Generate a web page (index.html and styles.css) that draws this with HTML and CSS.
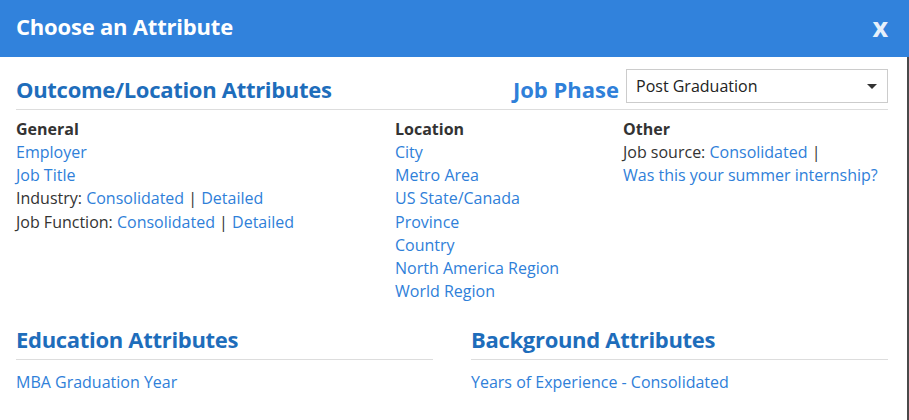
FILE: index.html
```html
<!DOCTYPE html>
<html>
<head>
<meta charset="utf-8">
<link rel="stylesheet" href="styles.css">
</head>
<body>
<div class="dialog">
  <div class="header">
    <span class="title">Choose an Attribute</span>
    <span class="close">x</span>
  </div>
  <div class="content">
    <div class="section-head">
      <h2 class="heading">Outcome/Location Attributes</h2>
      <div class="phase">
        <span class="phase-label">Job Phase</span>
        <div class="select">
          <span>Post Graduation</span>
          <span class="caret"></span>
        </div>
      </div>
    </div>
    <div class="columns">
      <div class="col col-general">
        <div class="col-title">General</div>
        <div class="row"><a class="link">Employer</a></div>
        <div class="row"><a class="link">Job Title</a></div>
        <div class="row">Industry: <a class="link">Consolidated</a> | <a class="link">Detailed</a></div>
        <div class="row">Job Function: <a class="link">Consolidated</a> | <a class="link">Detailed</a></div>
      </div>
      <div class="col col-location">
        <div class="col-title">Location</div>
        <div class="row"><a class="link">City</a></div>
        <div class="row"><a class="link">Metro Area</a></div>
        <div class="row"><a class="link">US State/Canada</a></div>
        <div class="row"><a class="link">Province</a></div>
        <div class="row"><a class="link">Country</a></div>
        <div class="row"><a class="link">North America Region</a></div>
        <div class="row"><a class="link">World Region</a></div>
      </div>
      <div class="col col-other">
        <div class="col-title">Other</div>
        <div class="row">Job source: <a class="link">Consolidated</a> |</div>
        <div class="row"><a class="link">Was this your summer internship?</a></div>
      </div>
    </div>
    <div class="bottom">
      <div class="block block-edu">
        <h2 class="heading sub">Education Attributes</h2>
        <div class="row"><a class="link">MBA Graduation Year</a></div>
      </div>
      <div class="block block-bg">
        <h2 class="heading sub">Background Attributes</h2>
        <div class="row"><a class="link">Years of Experience - Consolidated</a></div>
      </div>
    </div>
  </div>
</div>
</body>
</html>
```

FILE: styles.css
```css
html, body {
  margin: 0;
  padding: 0;
  background: #ffffff;
}
body {
  font-family: "Open Sans", "Noto Sans", sans-serif;
  color: #333333;
  font-size: 16px;
}
.dialog {
  width: 907px;
  height: 420px;
  border-right: 2px solid #4a4a4a;
  background: #ffffff;
}
.header {
  height: 57px;
  background: #3182dc;
  display: flex;
  align-items: center;
  justify-content: space-between;
  padding: 0 21px 6px 16px;
  box-sizing: border-box;
  margin-right: -2px;
}
.title {
  color: #ffffff;
  font-weight: 700;
  font-size: 22px;
  letter-spacing: -0.2px;
}
.close {
  color: #e6f0fb;
  font-weight: 700;
  font-size: 27px;
  line-height: 1;
  margin-top: 2px;
}
.content {
  padding: 0 19px 0 16px;
}
.section-head {
  display: flex;
  justify-content: space-between;
  align-items: flex-end;
  border-bottom: 1px solid #dddddd;
  padding-top: 12px;
  padding-bottom: 6px;
}
.heading {
  margin: 0;
  font-size: 22px;
  font-weight: 700;
  color: #1e6dbb;
  line-height: 28px;
  letter-spacing: -0.3px;
}
.phase {
  display: flex;
  align-items: flex-end;
  gap: 7px;
}
.phase-label {
  font-size: 22px;
  font-weight: 700;
  color: #2f80d9;
  line-height: 28px;
}
.select {
  width: 262px;
  height: 34px;
  box-sizing: border-box;
  border: 1px solid #cccccc;
  display: flex;
  align-items: center;
  justify-content: space-between;
  padding: 0 10px 0 9px;
  color: #222222;
  font-size: 16px;
}
.caret {
  width: 0;
  height: 0;
  border-left: 5px solid transparent;
  border-right: 5px solid transparent;
  border-top: 5px solid #333333;
}
.columns {
  display: grid;
  grid-template-columns: 379px 228px 1fr;
  padding-top: 8px;
}
.col-title {
  font-weight: 700;
  color: #333333;
  line-height: 23px;
}
.row {
  line-height: 23.2px;
  color: #333333;
  white-space: nowrap;
}
.link {
  color: #2f80d9;
  text-decoration: none;
}
.bottom {
  display: grid;
  grid-template-columns: 417px 1fr;
  gap: 38px;
  margin-top: 22px;
}
.heading.sub {
  border-bottom: 1px solid #dddddd;
  padding-bottom: 6px;
  margin-bottom: 11px;
}
```
